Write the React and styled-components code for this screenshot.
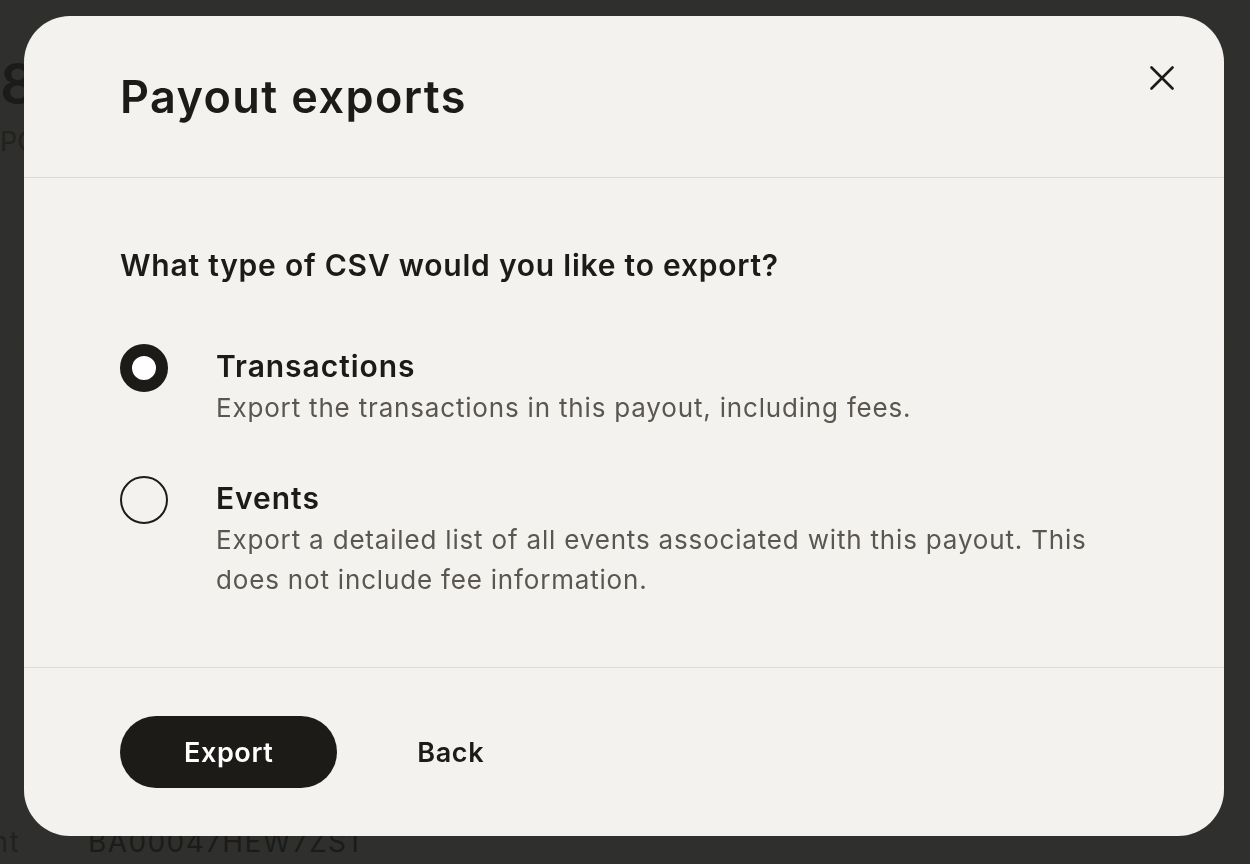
import React, { useState } from "react";
import styled, { createGlobalStyle } from "styled-components";

const GlobalStyle = createGlobalStyle`
  * { box-sizing: border-box; }
  html, body { margin: 0; padding: 0; }
  body {
    font-family: Inter, "Noto Sans", sans-serif;
    background: #f3f2ee;
    color: #1c1b18;
    -webkit-font-smoothing: antialiased;
  }
  button { font-family: inherit; }
`;

/* ---------- background page (under the overlay) ---------- */
const Page = styled.div`
  width: 1250px;
  height: 864px;
  overflow: hidden;
  background: #f3f2ee;
  display: flex;
  flex-direction: column;
`;

const Amount = styled.h1`
  margin: 52px 0 0 0;
  font-size: 56px;
  line-height: 64px;
  font-weight: 600;
  letter-spacing: -1px;
  white-space: nowrap;
`;

const Reference = styled.div`
  margin-top: 8px;
  font-size: 27px;
  line-height: 36px;
  color: #5a5750;
  white-space: nowrap;
`;

const Divider = styled.div`
  margin-top: 190px;
  height: 1px;
  background: #dcdad5;
`;

const Spacer = styled.div`
  flex: 1;
`;

const DetailRow = styled.div`
  display: flex;
  align-items: center;
  gap: 68px;
  padding-bottom: 4px;
  font-size: 28px;
  line-height: 36px;
  letter-spacing: 1.4px;
  white-space: nowrap;
`;

const DetailLabel = styled.div`
  width: 20px;
  display: flex;
  justify-content: flex-end;
  color: #5a5750;
`;

const DetailValue = styled.div`
  color: #1c1b18;
`;

/* ---------- overlay + modal ---------- */
const Overlay = styled.div`
  position: fixed;
  inset: 0;
  background: rgba(28, 27, 25, 0.91);
  display: flex;
  align-items: flex-start;
  justify-content: flex-start;
  padding: 16px 0 0 24px;
`;

const Modal = styled.div`
  width: 1200px;
  height: 820px;
  background: #f3f2ee;
  border-radius: 46px;
  display: flex;
  flex-direction: column;
  overflow: hidden;
`;

const Header = styled.div`
  height: 162px;
  border-bottom: 1px solid #dcdad5;
  display: flex;
  align-items: center;
  justify-content: space-between;
  padding: 0 42px 0 96px;
`;

const Title = styled.h2`
  margin: 0;
  font-size: 45px;
  line-height: 56px;
  font-weight: 600;
  letter-spacing: 1.4px;
  color: #1c1b18;
`;

const CloseButton = styled.button`
  align-self: flex-start;
  margin-top: 42px;
  width: 40px;
  height: 40px;
  border: none;
  background: transparent;
  padding: 0;
  display: flex;
  align-items: center;
  justify-content: center;
  color: #1c1b18;
  cursor: pointer;
`;

const Body = styled.div`
  flex: 1;
  padding: 67px 96px;
  display: flex;
  flex-direction: column;
`;

const Question = styled.h3`
  margin: 0 0 59px 0;
  font-size: 30px;
  line-height: 40px;
  font-weight: 600;
  letter-spacing: 0.77px;
  color: #1c1b18;
`;

const Options = styled.div`
  display: flex;
  flex-direction: column;
  gap: 48px;
`;

const Option = styled.label`
  display: flex;
  align-items: flex-start;
  gap: 48px;
  cursor: pointer;
`;

const Radio = styled.span`
  flex: none;
  width: 48px;
  height: 48px;
  border-radius: 50%;
  border: ${(p) => (p.$checked ? "12px solid #1c1b18" : "2px solid #1c1b18")};
  background: ${(p) => (p.$checked ? "#ffffff" : "transparent")};
`;

const OptionText = styled.div`
  display: flex;
  flex-direction: column;
  max-width: 880px;
`;

const OptionTitle = styled.div`
  font-size: 30px;
  line-height: 44px;
  font-weight: 600;
  letter-spacing: 0.95px;
  color: #1c1b18;
`;

const OptionDesc = styled.div`
  font-size: 26px;
  line-height: 40px;
  font-weight: 400;
  letter-spacing: 0.82px;
  color: #5a5750;
`;

const Footer = styled.div`
  border-top: 1px solid #dcdad5;
  padding: 48px 96px;
  display: flex;
  align-items: center;
  gap: 64px;
`;

const Button = styled.button`
  height: 72px;
  border: none;
  border-radius: 36px;
  padding: ${(p) => (p.$primary ? "0 64px" : "0 16px")};
  background: ${(p) => (p.$primary ? "#1c1b18" : "transparent")};
  color: ${(p) => (p.$primary ? "#ffffff" : "#1c1b18")};
  font-size: 27px;
  font-weight: 600;
  letter-spacing: 0.6px;
  cursor: pointer;
`;

const options = [
  {
    id: "transactions",
    title: "Transactions",
    desc: "Export the transactions in this payout, including fees.",
  },
  {
    id: "events",
    title: "Events",
    desc: "Export a detailed list of all events associated with this payout. This does not include fee information.",
  },
];

export default function App() {
  const [selected, setSelected] = useState("transactions");
  return (
    <>
      <GlobalStyle />
      <Page>
        <Amount>8</Amount>
        <Reference>PO</Reference>
        <Divider />
        <Spacer />
        <DetailRow>
          <DetailLabel>Payment</DetailLabel>
          <DetailValue>BA00047HEW7ZS1</DetailValue>
        </DetailRow>
      </Page>
      <Overlay>
        <Modal role="dialog" aria-modal="true">
          <Header>
            <Title>Payout exports</Title>
            <CloseButton aria-label="Close">
              <svg width="24" height="24" viewBox="0 0 24 24" fill="none">
                <path
                  d="M1.5 1.5 L22.5 22.5 M22.5 1.5 L1.5 22.5"
                  stroke="currentColor"
                  strokeWidth="2.6"
                  strokeLinecap="round"
                />
              </svg>
            </CloseButton>
          </Header>
          <Body>
            <Question>What type of CSV would you like to export?</Question>
            <Options>
              {options.map((o) => (
                <Option key={o.id} onClick={() => setSelected(o.id)}>
                  <Radio $checked={selected === o.id} />
                  <OptionText>
                    <OptionTitle>{o.title}</OptionTitle>
                    <OptionDesc>{o.desc}</OptionDesc>
                  </OptionText>
                </Option>
              ))}
            </Options>
          </Body>
          <Footer>
            <Button $primary>Export</Button>
            <Button>Back</Button>
          </Footer>
        </Modal>
      </Overlay>
    </>
  );
}
